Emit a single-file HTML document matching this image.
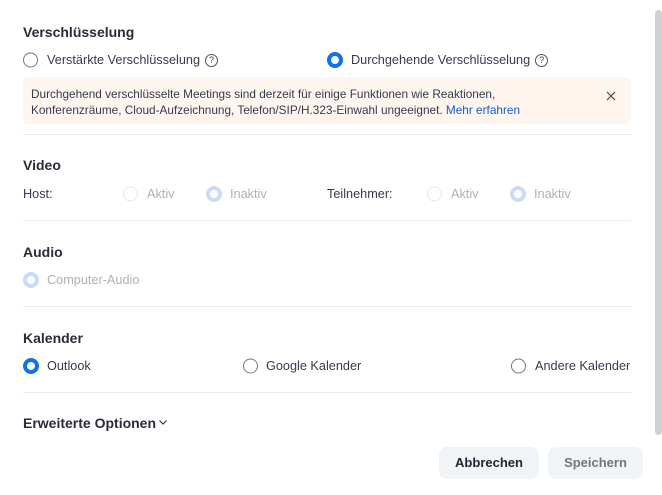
<!DOCTYPE html>
<html><head><meta charset="utf-8"><style>
body{margin:0;width:662px;height:495px;background:#fff;font-family:"Liberation Sans",sans-serif;color:#222;position:relative;overflow:hidden}
.a{position:absolute;white-space:nowrap}
.h{font-size:14px;font-weight:bold;color:#2a2a38;transform:translateY(-50%)}
.t{font-size:12.7px;color:#39394d;transform:translateY(-50%)}
.d{color:#b0b0b8}
.r{position:absolute;width:14px;height:14px;border-radius:50%;border:1px solid #6e7680;box-sizing:border-box;transform:translateY(-50%)}
.r.on{border:4px solid #0e72ed;width:16px;height:16px}
.r.dis{border:1px solid #e8e8ec}
.r.dison{border:4px solid #c9dcf7;width:16px;height:16px}
.hr{position:absolute;left:23px;width:608px;height:1px;background:#ebebef}
.q{display:inline-block;width:11px;height:11px;border:1px solid #555;border-radius:50%;font-size:9px;line-height:11px;text-align:center;margin-left:5px;vertical-align:1px}
.btn{position:absolute;top:447px;height:32px;border-radius:8px;background:#f1f4f6;font-size:13px;font-weight:bold;text-align:center;line-height:32px}
</style></head><body>
<div class="a" style="left:655px;top:10px;width:7px;height:425px;background:#cfd0d3;border-radius:4px"></div>

<div class="a h" style="left:23px;top:32px">Verschlüsselung</div>
<div class="r" style="left:23px;top:60px;width:15px;height:15px"></div>
<div class="a t" style="left:47px;top:60px">Verstärkte Verschlüsselung<span class="q">?</span></div>
<div class="r on" style="left:327px;top:60px"></div>
<div class="a t" style="left:351px;top:60px">Durchgehende Verschlüsselung<span class="q">?</span></div>

<div class="a" style="left:23px;top:77px;width:608px;height:47px;background:#fdf5ee;border-radius:6px"></div>
<div class="a" style="left:31px;top:86px;font-size:11.8px;line-height:16px;color:#39394d">Durchgehend verschlüsselte Meetings sind derzeit für einige Funktionen wie Reaktionen,<br>Konferenzräume, Cloud-Aufzeichnung, Telefon/SIP/H.323-Einwahl ungeeignet. <span style="color:#0e5fc7">Mehr erfahren</span></div>
<svg class="a" style="left:606px;top:91px" width="10" height="10" viewBox="0 0 10 10"><path d="M1 1L9 9M9 1L1 9" stroke="#444" stroke-width="1.2"/></svg>
<div class="hr" style="top:134px"></div>

<div class="a h" style="left:23px;top:165px">Video</div>
<div class="a t" style="left:23px;top:194px">Host:</div>
<div class="r dis" style="left:123px;top:194px;width:15px;height:15px"></div>
<div class="a t d" style="left:147px;top:194px">Aktiv</div>
<div class="r dison" style="left:206px;top:194px"></div>
<div class="a t d" style="left:230px;top:194px">Inaktiv</div>
<div class="a t" style="left:327px;top:194px">Teilnehmer:</div>
<div class="r dis" style="left:427px;top:194px;width:15px;height:15px"></div>
<div class="a t d" style="left:451px;top:194px">Aktiv</div>
<div class="r dison" style="left:510px;top:194px"></div>
<div class="a t d" style="left:534px;top:194px">Inaktiv</div>
<div class="hr" style="top:220px"></div>

<div class="a h" style="left:23px;top:252px">Audio</div>
<div class="r dison" style="left:23px;top:280px"></div>
<div class="a t d" style="left:47px;top:280px">Computer-Audio</div>
<div class="hr" style="top:306px"></div>

<div class="a h" style="left:23px;top:338px">Kalender</div>
<div class="r on" style="left:23px;top:366px"></div>
<div class="a t" style="left:47px;top:366px">Outlook</div>
<div class="r" style="left:243px;top:366px;width:15px;height:15px"></div>
<div class="a t" style="left:266px;top:366px">Google Kalender</div>
<div class="r" style="left:511px;top:366px;width:15px;height:15px"></div>
<div class="a t" style="left:535px;top:366px">Andere Kalender</div>
<div class="hr" style="top:392px"></div>

<div class="a h" style="left:23px;top:423px">Erweiterte Optionen</div>
<svg class="a" style="left:159px;top:420px" width="8" height="5" viewBox="0 0 8 5"><path d="M0.5 0.5L4 4L7.5 0.5" fill="none" stroke="#333" stroke-width="1.2"/></svg>

<div class="btn" style="left:439px;width:100px;color:#232333">Abbrechen</div>
<div class="btn" style="left:548px;width:95px;color:#6e7680">Speichern</div>
</body></html>
